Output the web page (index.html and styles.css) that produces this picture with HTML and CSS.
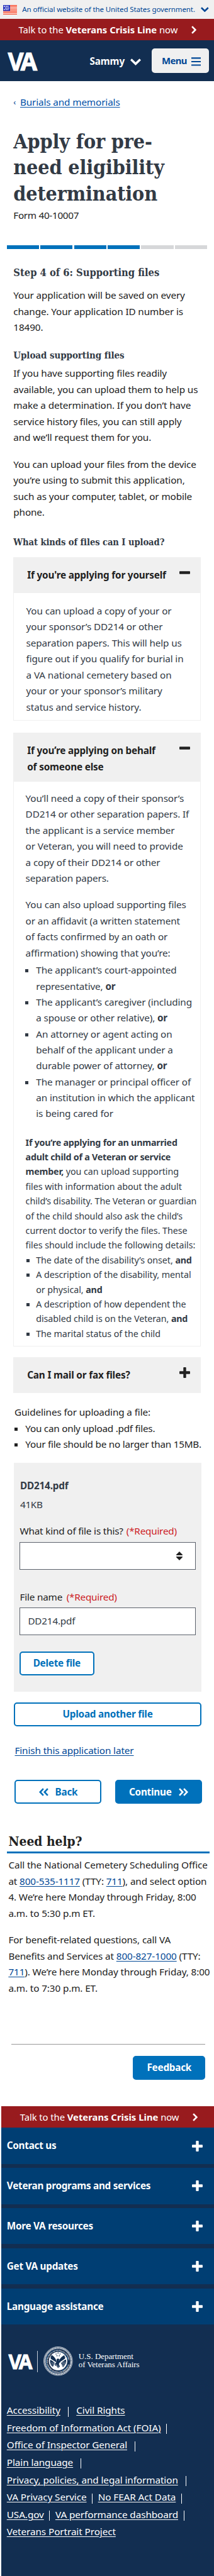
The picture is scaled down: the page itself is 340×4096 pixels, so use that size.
FILE: index.html
```html
<!DOCTYPE html>
<html lang="en">
<head>
<meta charset="utf-8">
<title>Apply for pre-need eligibility determination</title>
<link rel="stylesheet" href="styles.css">
</head>
<body>
<svg class="defs" width="0" height="0" aria-hidden="true">
  <symbol id="plus" viewBox="0 0 17 17"><rect x="0" y="6.3" width="17" height="4.4" rx="0.9"/><rect x="6.3" y="0" width="4.4" height="17" rx="0.9"/></symbol>
  <symbol id="minus" viewBox="0 0 17 17"><rect x="0" y="6.2" width="17" height="4.5" rx="0.9"/></symbol>
  <symbol id="down" viewBox="0 0 17 11"><path d="M1.2 1.6 8.5 8.6 15.8 1.6" fill="none" stroke="currentColor" stroke-width="3.5"/></symbol>
  <symbol id="right" viewBox="0 0 8 13"><path d="M1.1 1.1 6.4 6.5 1.1 11.9" fill="none" stroke="currentColor" stroke-width="2.6"/></symbol>
  <symbol id="double-right" viewBox="0 0 15 13"><path d="M1.1 1.2 6.2 6.5 1.1 11.8M8.1 1.2 13.2 6.5 8.1 11.8" fill="none" stroke="currentColor" stroke-width="2.6"/></symbol>
</svg>

<header>
  <div class="gov">
    <svg class="flag" viewBox="0 0 42 29">
      <rect width="42" height="29" fill="#fff"/>
      <path d="M0 1h42M0 5.5h42M0 10h42M0 14.5h42M0 19h42M0 23.3h42M0 27.7h42" stroke="#f63512" stroke-width="2.3"/>
      <rect width="21" height="18" fill="#2733bd"/>
      <path d="M2.5 4h3m2.2 0h3m2.2 0h3M5.5 9h3m1.7 0h3m1.7 0h3M2.5 14h3m2.2 0h3m2.2 0h3" stroke="#fff" stroke-width="3"/>
    </svg>
    <span class="gov-text">An official website of the United States government.</span>
    <svg class="gov-chevron"><use href="#down"/></svg>
  </div>
  <div class="crisis"><span>Talk to the <b>Veterans Crisis Line</b> now</span><svg class="crisis-chevron"><use href="#right"/></svg></div>
  <div class="nav">
    <span class="logo">VA</span>
    <span class="user">Sammy</span>
    <svg class="user-chevron"><use href="#down"/></svg>
    <div class="menu"><span>Menu</span><svg viewBox="0 0 15 14"><path d="M0 1.3h15M0 7h15M0 12.5h15" stroke="currentColor" stroke-width="2.2"/></svg></div>
  </div>
</header>

<main>
  <div class="crumb"><span class="crumb-arrow">‹</span><a>Burials and memorials</a></div>
  <h1>Apply for pre-<br>need eligibility<br>determination</h1>
  <p class="form-no">Form 40-10007</p>
  <div class="progress"><i class="done"></i><i class="done"></i><i class="done"></i><i class="done"></i><i></i><i></i></div>
  <h2>Step 4 of 6: Supporting files</h2>
  <p class="intro">Your application will be saved on every<br>change. Your application ID number is<br>18490.</p>
  <h3>Upload supporting files</h3>
  <p class="after-h3">If you have supporting files readily<br>available, you can upload them to help us<br>make a determination. If you don’t have<br>service history files, you can still apply<br>and we’ll request them for you.</p>
  <p class="para">You can upload your files from the device<br>you’re using to submit this application,<br>such as your computer, tablet, or mobile<br>phone.</p>
  <h3 class="kinds">What kinds of files can I upload?</h3>

  <section class="acc first">
    <div class="acc-head"><span>If you're applying for yourself</span><svg><use href="#minus"/></svg></div>
    <div class="acc-body self">
      <p>You can upload a copy of your or<br>your sponsor’s DD214 or other<br>separation papers. This will help us<br>figure out if you qualify for burial in<br>a VA national cemetery based on<br>your or your sponsor’s military<br>status and service history.</p>
    </div>
  </section>

  <section class="acc second">
    <div class="acc-head tall"><span>If you’re applying on behalf<br>of someone else</span><svg><use href="#minus"/></svg></div>
    <div class="acc-body other">
      <p>You’ll need a copy of their sponsor’s<br>DD214 or other separation papers. If<br>the applicant is a service member<br>or Veteran, you will need to provide<br>a copy of their DD214 or other<br>separation papers.</p>
      <p class="para">You can also upload supporting files<br>or an affidavit (a written statement<br>of facts confirmed by an oath or<br>affirmation) showing that you’re:</p>
      <ul class="roles">
        <li><div>The applicant’s court-appointed<br>representative, <b>or</b></div></li>
        <li><div>The applicant’s caregiver (including<br>a spouse or other relative), <b>or</b></div></li>
        <li><div>An attorney or agent acting on<br>behalf of the applicant under a<br>durable power of attorney, <b>or</b></div></li>
        <li><div>The manager or principal officer of<br>an institution in which the applicant<br>is being cared for</div></li>
      </ul>
      <div class="child">
        <p><b>If you’re applying for an unmarried<br>adult child of a Veteran or service<br>member,</b> you can upload supporting<br>files with information about the adult<br>child’s disability. The Veteran or guardian<br>of the child should also ask the child’s<br>current doctor to verify the files. These<br>files should include the following details:</p>
        <ul>
          <li><div>The date of the disability’s onset, <b>and</b></div></li>
          <li><div>A description of the disability, mental<br>or physical, <b>and</b></div></li>
          <li><div>A description of how dependent the<br>disabled child is on the Veteran, <b>and</b></div></li>
          <li><div>The marital status of the child</div></li>
        </ul>
      </div>
    </div>
  </section>

  <section class="acc third">
    <div class="acc-head"><span>Can I mail or fax files?</span><svg><use href="#plus"/></svg></div>
  </section>

  <div class="guide">
    <p>Guidelines for uploading a file:</p>
    <ul>
      <li><div>You can only upload .pdf files.</div></li>
      <li><div>Your file should be no larger than 15MB.</div></li>
    </ul>
  </div>

  <section class="card">
    <p class="fname">DD214.pdf</p>
    <p class="fsize">41KB</p>
    <div class="label l1"><span>What kind of file is this?</span><em>(*Required)</em></div>
    <div class="field select"><svg viewBox="0 0 10 14"><path d="M0 5.9V4.9L5 0l5 4.9v1zM0 8.1v1L5 14l5-4.9v-1z"/></svg></div>
    <div class="label l2"><span>File name</span><em>(*Required)</em></div>
    <div class="field text">DD214.pdf</div>
    <div class="btn delete">Delete file</div>
  </section>
  <div class="btn upload">Upload another file</div>
  <div class="later"><a>Finish this application later</a></div>
  <div class="pair">
    <div class="btn back"><svg class="flip"><use href="#double-right"/></svg><span>Back</span></div>
    <div class="btn solid next"><span>Continue</span><svg><use href="#double-right"/></svg></div>
  </div>
</main>

<section class="help">
  <h2 class="help-title">Need help?</h2>
  <div class="rule"></div>
  <p>Call the National Cemetery Scheduling Office<br>at <a>800-535-1117</a> (TTY: <a>711</a>), and select option<br>4. We’re here Monday through Friday, 8:00<br>a.m. to 5:30 p.m ET.</p>
  <p class="para">For benefit-related questions, call VA<br>Benefits and Services at <a>800-827-1000</a> (TTY:<br><a>711</a>). We’re here Monday through Friday, 8:00<br>a.m. to 7:30 p.m. ET.</p>
</section>
<div class="feedback"><div class="btn solid">Feedback</div></div>

<footer>
  <div class="crisis"><span>Talk to the <b>Veterans Crisis Line</b> now</span><svg class="crisis-chevron"><use href="#right"/></svg></div>
  <div class="rows">
    <div class="row"><span>Contact us</span><svg><use href="#plus"/></svg></div>
    <div class="row"><span>Veteran programs and services</span><svg><use href="#plus"/></svg></div>
    <div class="row"><span>More VA resources</span><svg><use href="#plus"/></svg></div>
    <div class="row"><span>Get VA updates</span><svg><use href="#plus"/></svg></div>
    <div class="row"><span>Language assistance</span><svg><use href="#plus"/></svg></div>
  </div>
  <div class="brand">
    <span class="logo small">VA</span>
    <i class="divider"></i>
    <svg class="seal" viewBox="0 0 264 264">
      <defs>
        <path id="arc-top" d="M40 150A93 93 0 1 1 224 150"/>
        <path id="arc-bottom" d="M30 158A105 105 0 0 0 234 158"/>
      </defs>
      <circle cx="132" cy="132" r="129" fill="none" stroke="#fff" stroke-width="4"/>
      <circle cx="132" cy="132" r="119" fill="none" stroke="#fff" stroke-width="11" stroke-dasharray="6.5 3"/>
      <circle cx="132" cy="132" r="111" fill="none" stroke="#fff" stroke-width="2"/>
      <circle cx="132" cy="132" r="83" fill="#fff"/>
      <text class="seal-text"><textPath href="#arc-top" textLength="294" lengthAdjust="spacingAndGlyphs">DEPARTMENT OF VETERANS AFFAIRS</textPath></text>
      <text class="seal-text"><textPath href="#arc-bottom" textLength="272" lengthAdjust="spacingAndGlyphs">UNITED STATES OF AMERICA</textPath></text>
      <g fill="#122e51">
        <path d="m132 52 2 5h5l-4 3 2 6-5-4-5 4 2-6-4-3h5zM114 61l2 5h5l-4 3 2 6-5-4-5 4 2-6-4-3h5zM150 61l2 5h5l-4 3 2 6-5-4-5 4 2-6-4-3h5zM122 76l2 5h5l-4 3 2 6-5-4-5 4 2-6-4-3h5zM143 76l2 5h5l-4 3 2 6-5-4-5 4 2-6-4-3h5z"/>
        <path d="M118 134c-4-16-19-46-48-59l3 11-8-4 5 12-9-3 7 12-8-1 9 12-8 1 20 9 36 20zM139 134c4-16 22-44 51-56l-3 10 8-3-5 12 9-3-7 12 8-1-9 11 8 1-20 10-34 20z"/>
        <path d="M119 116q13-14 27 2l-8 6 9 14-8 22 9 22-16 14-14-18-14-6-5-14 19-18z"/>
        <path d="M66 118q22 12 35 30l-16 36q-32-26-25-60zM198 118q-22 12-40 32l18 38q36-32 28-66z"/>
      </g>
      <path d="M54 108 112 146M211 104 152 144" stroke="#fff" stroke-width="8"/>
      <path d="M66 140l24 22M63 152l22 20M84 142l16 20M96 166l24 10M100 156l24 10M196 136l-18 46M184 136l-15 42M172 142l-10 24M204 144l-16 34" stroke="#fff" stroke-width="4" stroke-dasharray="6 3"/>
      <path d="M104 182l18-10-5 20M154 168l-12 30M132 172v26" stroke="#fff" stroke-width="3" fill="none"/>
    </svg>
    <span class="dept">U.S. Department<br>of Veterans Affairs</span>
  </div>
  <nav class="links">
    <div><a>Accessibility</a><i class="wide"></i><a>Civil Rights</a></div>
    <div><a>Freedom of Information Act (FOIA)</a><i></i></div>
    <div><a>Office of Inspector General</a><i class="wide"></i></div>
    <div><a>Plain language</a><i class="wide"></i></div>
    <div><a>Privacy, policies, and legal information</a><i class="wide"></i></div>
    <div><a>VA Privacy Service</a><i></i><a>No FEAR Act Data</a><i></i></div>
    <div><a>USA.gov</a><i></i><a>VA performance dashboard</a><i></i></div>
    <div><a>Veterans Portrait Project</a></div>
  </nav>
</footer>
</body>
</html>
```
FILE: styles.css
```css
* { box-sizing: border-box; }
body {
  margin: 0;
  width: 340px;
  height: 4096px;
  overflow: hidden;
  display: flex;
  flex-direction: column;
  background: #fff;
  color: #212121;
  font: 400 15.3px/25.5px "Noto Sans", sans-serif;
  letter-spacing: -0.125px;
  white-space: nowrap;
}
p, h1, h2, h3, ul { margin: 0; padding: 0; }
ul { list-style: none; }
b { font-weight: 700; letter-spacing: -0.24px; }
svg { display: block; flex: none; fill: currentColor; }
a { text-decoration: underline; text-decoration-thickness: 1px; text-underline-offset: 2px; color: #004795; }
.defs { position: absolute; }

/* Header */
.gov { height: 30.4px; background: #f0f0f0; display: flex; align-items: center; padding: 0 8.5px 0 5.2px; color: #004795; }
.flag { width: 22px; height: 15.2px; }
.gov-text { margin: 0 auto 0 8.1px; font-size: 11.5px; letter-spacing: -0.11px; line-height: 16px; }
.gov-chevron { width: 12.7px; height: 8.4px; }
.crisis { height: 34px; background: #981b1e; color: #fff; display: flex; align-items: center; padding-left: 29.5px; font-size: 14.8px; letter-spacing: -0.06px; }
.crisis > span { width: 274.7px; }
.crisis b { letter-spacing: 0.02px; }
.crisis-chevron { width: 8px; height: 13px; }
.nav { height: 64.7px; background: #122e51; color: #fff; display: flex; align-items: center; padding: 0 8.5px 0 12.6px; }
.logo { width: 129.9px; font: 700 38.6px/50px "Noto Sans", sans-serif; letter-spacing: -3.6px; -webkit-text-stroke: 0.9px #fff; }
.user { width: 64.8px; font-weight: 700; letter-spacing: -0.13px; line-height: 26px; padding-top: 1px; }
.user-chevron { width: 17px; height: 11px; margin-top: 3px; }
.menu { width: 90.5px; height: 39.5px; margin-left: auto; border-radius: 5px; background: #f0f0f0; color: #004795; display: flex; align-items: center; padding-left: 16px; font-size: 14.9px; font-weight: 700; letter-spacing: -0.65px; }
.menu span { width: 46.8px; }
.menu svg { width: 15px; height: 14px; margin-top: 2px; }

/* Form page */
main { padding: 21px 21.3px 0; }
.crumb { display: flex; }
.crumb a { color: #0050a8; letter-spacing: -0.14px; }
.crumb-arrow { width: 10.7px; font-size: 13px; color: #004795; }
h1, h2, h3 { font-family: "DejaVu Serif Condensed", "DejaVu Serif", serif; font-stretch: condensed; color: #323a45; }
h1 { margin-top: 29.3px; font-size: 32px; line-height: 41.5px; letter-spacing: -0.15px; }
.form-no { margin-top: 0.6px; letter-spacing: -0.32px; }
.progress { display: grid; grid-template-columns: repeat(6, 51.3px); justify-content: space-between; margin: 34.8px -10.5px 0 -10.7px; height: 6px; }
.progress i { background: #d6d7d9; }
.progress .done { background: #0071bb; }
h2 { margin-top: 25.3px; font-size: 16.4px; line-height: 24px; letter-spacing: 0; }
.intro { margin-top: 11.5px; }
h3 { margin-top: 19.2px; font-size: 15px; line-height: 24px; letter-spacing: -0.08px; }
.after-h3 { margin-top: 4.5px; }
.para { margin-top: 16.9px; }
.kinds { margin-top: 22.7px; font-size: 14.6px; letter-spacing: -0.07px; }

/* Accordions */
.acc { width: 297.5px; }
.acc-head { height: 57.6px; background: #f0f0f0; display: flex; justify-content: space-between; align-items: flex-start; padding: 16.5px 17.1px 0 21.9px; font-weight: 700; letter-spacing: -0.17px; }
.acc-head svg { width: 17px; height: 17px; margin-top: -0.5px; }
.acc-head.tall { height: 78.8px; line-height: 25.6px; }
.acc-body { border: 1px solid #f0f0f0; border-top: 0; color: #323a45; }
.first { margin-top: 11.5px; }
.self { height: 202.7px; padding: 15.3px 0 0 19.3px; }
.second { margin-top: 18.5px; }
.other { height: 897.2px; padding: 13.2px 0 0 18.3px; }
.third { margin-top: 17.3px; }
li { display: flex; }
li::before { content: ""; width: 5px; height: 5px; flex: none; background: currentColor; margin: 11px 12.3px 0 0; }
.roles { margin: 1.9px 0 0 -0.6px; line-height: 25.33px; }
.child { margin-top: 20.9px; font-size: 14.3px; line-height: 23.4px; letter-spacing: -0.06px; }
.child li::before { margin: 10px 10.2px 0 1.4px; }
.guide { margin: 17.7px 0 0 1.7px; }
.guide ul { letter-spacing: -0.25px; }

/* Uploaded file card */
.card { width: 297.5px; height: 363.8px; margin: 16.2px 0 0 1px; padding: 24.3px 8.5px 0; background: #f0f0f0; }
.fname, .fsize { padding-left: 1.2px; color: #323a45; }
.fname { font-weight: 700; letter-spacing: -0.2px; }
.fsize { margin-top: 4.1px; letter-spacing: -0.35px; }
.label { display: flex; gap: 5px; padding-left: 0.6px; letter-spacing: -0.18px; }
.label em { font-style: normal; color: #cd2026; letter-spacing: -0.24px; }
.l1 { margin-top: 16.8px; }
.l2 { margin-top: 30.2px; gap: 6.5px; }
.field { width: 280.5px; height: 44.8px; border: 1px solid #5b616b; background: #fff; display: flex; align-items: center; }
.select { margin-top: 4px; justify-content: flex-end; padding-right: 20.6px; }
.select svg { width: 10px; height: 14px; }
.text { margin-top: 3.6px; padding: 0 0 0 12.6px; color: #323a45; letter-spacing: -0.2px; }
.btn { height: 38.3px; border: 2px solid #0071bb; border-radius: 5px; background: #fff; color: #0071bb; display: flex; align-items: center; justify-content: center; font-weight: 700; letter-spacing: -0.24px; }
.solid { background: #0071bb; color: #fff; }
.delete { width: 119px; margin-top: 25.4px; }
.upload { width: 297.5px; margin: 17.1px 0 0 1px; }
.later { margin: 25.8px 0 0 2.2px; }
.pair { display: flex; justify-content: space-between; width: 297.5px; margin: 33.8px 0 0 2.1px; }
.pair .btn { width: 138.1px; gap: 11px; }
.pair svg { width: 15px; height: 13px; }
.flip { transform: scaleX(-1); }

/* Help and feedback */
.help { padding: 0 7px 0 13.4px; }
.help-title { margin-top: 44.4px; font-size: 20.8px; line-height: 30px; color: #212121; }
.rule { height: 3px; margin: 1.6px 0 5.8px -2.4px; background: #0071bb; }
.feedback { margin: 76.3px 13.9px 0 18px; border-top: 1px solid #999; padding-top: 17.1px; display: flex; justify-content: flex-end; }
.feedback .btn { width: 114.7px; }

/* Footer */
footer { flex: 1; margin: 42.6px 0 0 2.2px; background: #122e51; color: #fff; }
.rows { display: flex; flex-direction: column; gap: 6.3px; }
.row { height: 57.5px; background: #003e73; display: flex; align-items: center; justify-content: space-between; padding: 0 18px 0 8.6px; font-weight: 700; letter-spacing: -0.27px; }
.row svg { width: 17px; height: 17px; }
.brand { display: flex; align-items: center; height: 46.6px; margin: 35.4px 0 0 11.2px; }
.logo.small { width: 45.5px; font-size: 31.6px; line-height: 42px; letter-spacing: -2.9px; -webkit-text-stroke-width: 0.8px; }
.divider { width: 1px; height: 33.5px; background: #c4ccd6; }
.seal { width: 46.6px; height: 46.6px; margin-left: 9.3px; }
.seal-text { font: 700 17px "Liberation Serif", serif; fill: #fff; letter-spacing: 0; }
.dept { margin: 0 0 1px 9px; font: 400 13px/12.8px "Liberation Serif", serif; letter-spacing: -0.05px; }
.links { margin: 41.2px 0 0 8.6px; line-height: 27.6px; letter-spacing: -0.09px; }
.links div { display: flex; align-items: center; height: 27.6px; }
.links a { color: #fff; }
.links i { width: 1px; height: 16px; margin: 3px 8.6px 0; background: #fff; }
.links .wide { margin: 3px 12.2px 0; }
```
